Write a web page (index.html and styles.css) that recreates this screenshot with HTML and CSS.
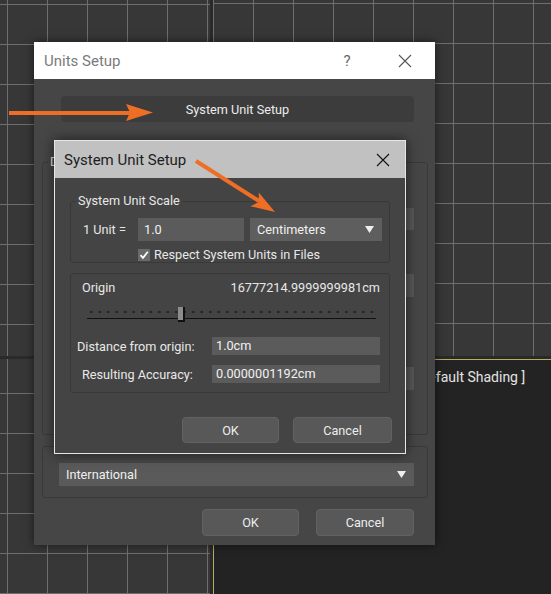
FILE: index.html
```html
<!DOCTYPE html>
<html>
<head>
  <title>Units Setup</title>
  <meta name="viewport" content="width=device-width, initial-scale=1">
  <link rel="stylesheet" href="styles.css">
</head>
<body>

<div class="viewports">
  <div class="vp vp-top-left"></div>
  <div class="vp vp-top-right"></div>
  <div class="vp vp-bottom-left"></div>
  <div class="vp vp-persp"><span class="vp-label">[ Default Shading ]</span></div>
</div>

<!-- outer window -->
<div class="dialog units-setup">
  <div class="titlebar">
    <span class="title">Units Setup</span>
    <span class="help">?</span>
    <svg class="close" width="14" height="14" viewBox="0 0 14 14"><path d="M1 1L13 13M13 1L1 13" stroke="#555" stroke-width="1.1"/></svg>
  </div>
  <div class="dlg-body">
    <button class="btn-wide">System Unit Setup</button>

    <div class="group display-group">
      <span class="group-title">Display Unit Scale</span>
      <div class="hidden-field f1"></div>
      <div class="hidden-field f2"></div>
      <div class="hidden-field f3"></div>
    </div>

    <div class="group lighting-group">
      <span class="group-title">Lighting Units</span>
      <div class="combo">
        <span>International</span>
        <svg class="arrow" width="9" height="7" viewBox="0 0 9 7"><path d="M0 0H9L4.5 7Z" fill="#eee"/></svg>
      </div>
    </div>

    <div class="btn-row">
      <button class="btn btn-ok">OK</button>
      <button class="btn btn-cancel">Cancel</button>
    </div>
  </div>
</div>

<!-- System Unit Setup window -->
<div class="dialog system-unit">
  <div class="titlebar">
    <span class="title">System Unit Setup</span>
    <svg class="close" width="14" height="14" viewBox="0 0 14 14"><path d="M1 1L13 13M13 1L1 13" stroke="#111" stroke-width="1.1"/></svg>
  </div>
  <div class="dlg-body">
    <div class="group scale-group">
      <span class="group-title">System Unit Scale</span>
      <div class="scale-row">
        <span class="scale-label">1 Unit =</span>
        <div class="field unit-field">1.0</div>
        <div class="combo unit-combo">
          <span>Centimeters</span>
          <svg class="arrow" width="9" height="7" viewBox="0 0 9 7"><path d="M0 0H9L4.5 7Z" fill="#eee"/></svg>
        </div>
      </div>
      <div class="check-row">
        <span class="checkbox"><svg width="12" height="12" viewBox="0 0 12 12"><path d="M2.5 6.2L5 8.8L9.8 2.8" stroke="#fff" stroke-width="1.8" fill="none"/></svg></span>
        <span>Respect System Units in Files</span>
      </div>
    </div>

    <div class="group origin-group">
      <div class="origin-row">
        <span>Origin</span>
        <span>16777214.9999999981cm</span>
      </div>
      <div class="slider"><span class="thumb"></span></div>
      <div class="value-row distance-row">
        <span class="value-label">Distance from origin:</span>
        <div class="field value-field">1.0cm</div>
      </div>
      <div class="value-row accuracy-row">
        <span class="value-label">Resulting Accuracy:</span>
        <div class="field value-field">0.0000001192cm</div>
      </div>
    </div>

    <div class="btn-row">
      <button class="btn btn-ok">OK</button>
      <button class="btn btn-cancel">Cancel</button>
    </div>
  </div>
</div>

<!-- orange annotation arrows -->
<svg class="annotations" width="551" height="594" viewBox="0 0 551 594">
  <path d="M9 113H130" stroke="#ee6e25" stroke-width="4"/>
  <path d="M126 104L153 112.5L126 121L130 112.5Z" fill="#ee6e25"/>
  <path d="M196 161L259 201" stroke="#ee6e25" stroke-width="4"/>
  <path d="M250.4 206.2L275 212L258.8 192.6L258.8 202Z" fill="#ee6e25"/>
</svg>

</body>
</html>
```

FILE: styles.css
```css
body {
  margin: 0;
  width: 551px;
  height: 594px;
  overflow: hidden;
  position: relative;
  background: #2a2a2a;
  font-family: Roboto, "Noto Sans", sans-serif;
  font-size: 12.7px;
  color: #e8e8e8;
}

/* viewports behind the dialogs */

.viewports {
  display: grid;
  grid-template-columns: 210px 1fr;
  grid-template-rows: 356px 1fr;
  gap: 3px;
  height: 594px;
}

.vp {
  background-color: #373737;
  background-image: repeating-linear-gradient(to right, #6e6e6e 0 1px, transparent 1px 40px),
                    repeating-linear-gradient(to bottom, #6e6e6e 0 1px, transparent 1px 40px);
}

.vp-top-left { background-position: 7px 4px; }
.vp-top-right { background-position: 0 3px; }
.vp-bottom-left { background-position: 7px 34px; }

.vp-persp {
  background: #232323;
  border-top: 1px solid #b9ab62;
  border-left: 1px solid #b9ab62;
  padding: 9px 0 0 198px;
}

.vp-label {
  font-size: 14px;
  line-height: 16px;
  color: #e4e4e4;
  white-space: nowrap;
}

/* windows */

.dialog {
  position: absolute;
  box-sizing: border-box;
  background: #444;
  box-shadow: 0 0 9px rgba(0, 0, 0, 0.55);
}

.titlebar {
  display: flex;
  align-items: center;
}

.title {
  flex: 1;
  font-size: 15px;
}

.units-setup {
  left: 34px;
  top: 42px;
  width: 401px;
  height: 503px;
  background: #464646;
}

.units-setup .titlebar {
  height: 37px;
  padding-left: 10px;
  background: #fff;
  color: #7b7b7b;
}

.help {
  width: 16px;
  text-align: center;
  font-size: 15px;
  color: #666;
  margin-right: 43px;
}

.units-setup .close { margin-right: 23px; }

.units-setup .dlg-body {
  padding: 17px 7px 0 8px;
}

button {
  font-family: inherit;
  font-size: 12.7px;
  color: #ececec;
  cursor: pointer;
}

.btn-wide {
  display: block;
  width: 353px;
  height: 26px;
  margin-left: 19px;
  background: #3c3c3c;
  border: none;
  border-radius: 4px;
}

.group {
  position: relative;
  box-sizing: border-box;
  border: 1px solid #393939;
  border-radius: 3px;
}

.group-title {
  display: block;
  width: fit-content;
  margin: -9px 0 0 5px;
  padding: 0 2px;
  line-height: 16px;
}

.units-setup .group-title { background: #464646; }
.system-unit .group-title { background: #444; }

.display-group {
  margin-top: 40px;
  height: 273px;
  padding-right: 13px;
}

.hidden-field {
  width: 300px;
  height: 22px;
  margin-left: auto;
  background: #585858;
}

.f1 { margin-top: 38px; }
.f2 { margin-top: 44px; height: 23px; }
.f3 { margin-top: 70px; height: 23px; }

.lighting-group {
  margin-top: 11px;
  height: 52px;
  padding: 0 13px 0 16px;
}

.lighting-group .combo {
  margin-top: 9px;
}

.combo {
  display: flex;
  align-items: center;
  justify-content: space-between;
  box-sizing: border-box;
  height: 23px;
  padding: 0 8px 0 7px;
  background: #5a5a5a;
  color: #f0f0f0;
}

.btn-row {
  display: flex;
  justify-content: flex-end;
}

.btn {
  box-sizing: border-box;
  background: #585858;
  border: 1px solid #626262;
  border-radius: 4px;
}

.units-setup .btn-row {
  margin: 11px 14px 0 0;
  gap: 17px;
}

.units-setup .btn { height: 27px; }
.units-setup .btn-ok { width: 97px; }
.units-setup .btn-cancel { width: 98px; }

/* System Unit Setup window */

.system-unit {
  left: 54px;
  top: 140px;
  width: 352px;
  height: 314px;
  border: 1px solid #e6e6e6;
  box-shadow: 0 0 12px rgba(0, 0, 0, 0.6);
}

.system-unit .titlebar {
  height: 37px;
  padding-left: 9px;
  background: #c1c1c1;
  color: #1d1d1d;
}

.system-unit .close { margin-right: 15px; }

.system-unit .dlg-body {
  padding: 23px 15px 0 15px;
}

.scale-group {
  height: 62px;
}

.scale-row {
  display: flex;
  align-items: center;
  margin-top: 9px;
  height: 23px;
}

.scale-label {
  width: 55px;
  margin-left: 12px;
}

.field {
  box-sizing: border-box;
  background: #5b5b5b;
  color: #f2f2f2;
  padding-left: 6px;
}

.unit-field {
  width: 106px;
  height: 23px;
  line-height: 23px;
}

.unit-combo {
  width: 132px;
  margin-left: 6px;
  background: #5e5e5e;
}

.check-row {
  display: flex;
  align-items: center;
  height: 17px;
  margin-top: 5px;
  padding-left: 67px;
}

.checkbox {
  display: flex;
  width: 12px;
  height: 12px;
  margin-right: 4px;
  background: #6a6a6a;
}

.origin-group {
  margin-top: 10px;
  height: 120px;
  padding-top: 6px;
}

.origin-row {
  display: flex;
  justify-content: space-between;
  line-height: 16px;
  padding: 0 9px 0 11px;
}

.slider {
  position: relative;
  width: 289px;
  height: 20px;
  margin: 8px 0 0 16px;
  background-image: radial-gradient(circle, #262626 1px, transparent 1.6px);
  background-size: 8.5px 4px;
  background-repeat: repeat-x;
  background-position: 0 6px;
}

.slider::after {
  content: "";
  position: absolute;
  left: 0;
  right: 0;
  top: 14px;
  height: 1px;
  background: #111;
}

.thumb {
  position: absolute;
  left: 91px;
  top: 3px;
  width: 5px;
  height: 13px;
  background: #8c8c8c;
  border-right: 2px solid #111;
  border-bottom: 2px solid #111;
  z-index: 1;
}

.value-row {
  display: flex;
  align-items: center;
  height: 18px;
}

.distance-row { margin-top: 13px; }
.accuracy-row { margin-top: 10px; }

.value-label {
  width: 135px;
  margin-left: 6px;
}

.accuracy-row .value-label {
  width: 130px;
  margin-left: 11px;
}

.value-field {
  width: 168px;
  height: 18px;
  line-height: 18px;
  padding-left: 4px;
}

.system-unit .btn-row {
  margin: 24px -2px 0 0;
  gap: 14px;
}

.system-unit .btn { height: 26px; }
.system-unit .btn-ok { width: 97px; }
.system-unit .btn-cancel { width: 99px; }

.annotations {
  position: absolute;
  left: 0;
  top: 0;
  pointer-events: none;
}
```
